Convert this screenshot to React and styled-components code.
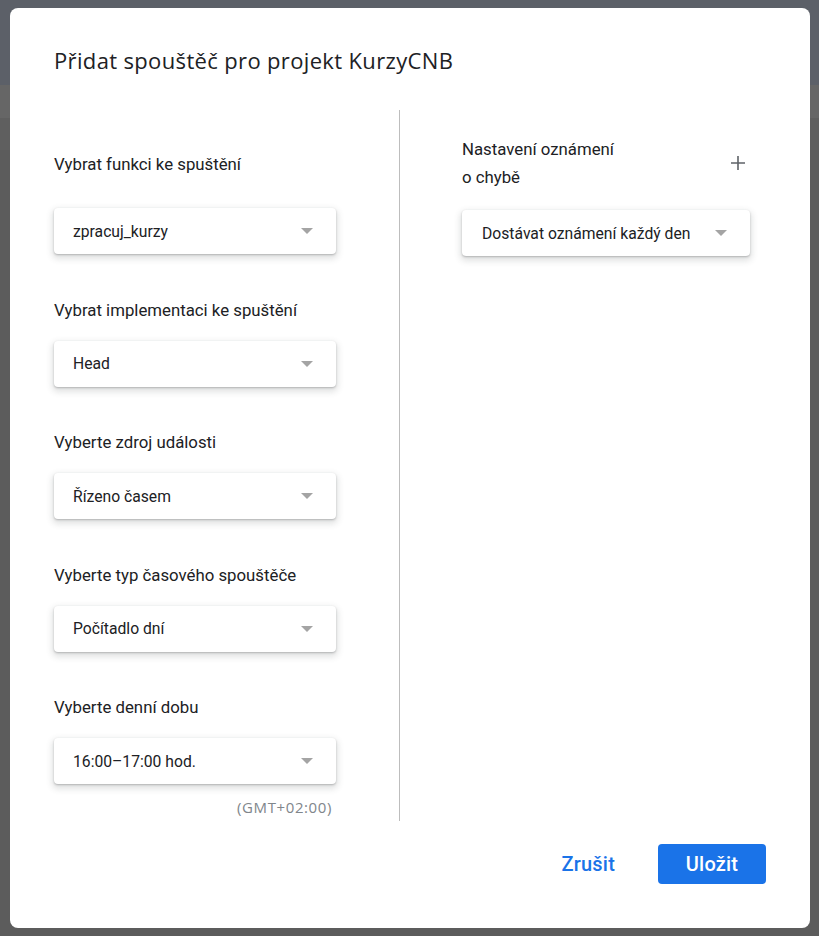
import React from 'react'
import styled, { createGlobalStyle } from 'styled-components'

const GlobalStyle = createGlobalStyle`
    html, body {
        margin: 0;
        padding: 0;
        background: #5c5c5c;
    }
    body {
        font-family: Roboto, 'Noto Sans', Arial, sans-serif;
        color: #202124;
    }
`

const MyBackdrop = styled.div`
    height: 936px;
    display: flex;
    flex-direction: column;
`
const MyBand = styled.div`
    height: ${props => props.h}px;
    flex: ${props => (props.h ? 'none' : 1)};
    background: ${props => props.bg};
`

const MyOverlay = styled.div`
    position: fixed;
    inset: 0;
    display: flex;
    align-items: flex-start;
    padding: 8px 0 0 10px;
`
const MyDialog = styled.div`
    box-sizing: border-box;
    width: 800px;
    height: 920px;
    background: #fff;
    border-radius: 8px;
    padding: 38px 44px 44px;
    display: flex;
    flex-direction: column;
`
const MyTitle = styled.h1`
    margin: 0;
    font-family: 'Open Sans', Roboto, Arial, sans-serif;
    font-size: 22px;
    line-height: 28px;
    letter-spacing: 0.35px;
    font-weight: 400;
    color: #202124;
`
const MyBody = styled.div`
    display: flex;
    margin-top: 36px;
`
const MyLeft = styled.div`
    width: 282px;
    padding: 44px 63px 4px 0;
    border-right: 1px solid #bdbdbd;
    display: flex;
    flex-direction: column;
`
const MyRight = styled.div`
    width: 288px;
    padding: 25px 0 0 62px;
`
const MyField = styled.div`
    display: flex;
    flex-direction: column;
    & + & {
        margin-top: 45.5px;
    }
`
const MyLabel = styled.div`
    font-size: 16.8px;
    line-height: 20px;
    color: #202124;
    margin-bottom: ${props => (props.first ? 34 : 21)}px;
`
const MySelect = styled.div`
    box-sizing: border-box;
    height: 46px;
    display: flex;
    align-items: center;
    justify-content: space-between;
    padding: 0 23px 0 ${props => props.pl || 19}px;
    background: #fff;
    border-radius: 4px;
    box-shadow: 0 1px 2px 0 rgba(60, 64, 67, 0.3), 0 3px 6px 2px rgba(60, 64, 67, 0.15);
    font-size: 15.7px;
    color: #202124;
    cursor: pointer;
`
const MyArrow = styled.span`
    width: 0;
    height: 0;
    border-left: 6.5px solid transparent;
    border-right: 6.5px solid transparent;
    border-top: 6.5px solid #a4a4a4;
`
const MyZone = styled.div`
    margin-top: 13px;
    padding-right: 4px;
    text-align: right;
    font-family: 'Open Sans', Roboto, Arial, sans-serif;
    font-size: 15px;
    letter-spacing: 0.6px;
    line-height: 20px;
    color: #80868b;
`
const MyNotifyHead = styled.div`
    display: flex;
    align-items: center;
    justify-content: space-between;
    margin-bottom: 19px;
`
const MyNotifyLabel = styled.div`
    font-size: 16.8px;
    line-height: 28px;
    color: #202124;
`
const MyIconButton = styled.button`
    width: 24px;
    height: 24px;
    padding: 0;
    border: 0;
    background: none;
    display: flex;
    align-items: center;
    justify-content: center;
    color: #5f6368;
    cursor: pointer;
`
const MyFooter = styled.div`
    margin-top: auto;
    display: flex;
    justify-content: flex-end;
    align-items: center;
    gap: 43px;
`
const MyButton = styled.button`
    height: 40px;
    padding: 0;
    width: ${props => (props.primary ? '108px' : 'auto')};
    border: 0;
    border-radius: 4px;
    font-family: Roboto, Arial, sans-serif;
    font-size: 20px;
    font-weight: 500;
    letter-spacing: 0.2px;
    color: ${props => (props.primary ? '#fff' : '#1a73e8')};
    background: ${props => (props.primary ? '#1a73e8' : 'transparent')};
    cursor: pointer;
`

const fields = [
    { label: 'Vybrat funkci ke spuštění', value: 'zpracuj_kurzy' },
    { label: 'Vybrat implementaci ke spuštění', value: 'Head' },
    { label: 'Vyberte zdroj události', value: 'Řízeno časem' },
    { label: 'Vyberte typ časového spouštěče', value: 'Počítadlo dní' },
    { label: 'Vyberte denní dobu', value: '16:00–17:00 hod.' },
]

function Select({ value, pl }) {
    return (
        <MySelect pl={pl}>
            <span>{value}</span>
            <MyArrow />
        </MySelect>
    )
}

function App() {
    return (
        <>
            <GlobalStyle />
            <MyBackdrop>
                <MyBand h={85} bg='#5c6068' />
                <MyBand h={33} bg='#666666' />
                <MyBand h={32} bg='#5f5f5f' />
                <MyBand bg='#5c5c5c' />
            </MyBackdrop>
            <MyOverlay>
                <MyDialog>
                    <MyTitle>Přidat spouštěč pro projekt KurzyCNB</MyTitle>
                    <MyBody>
                        <MyLeft>
                            {fields.map((f, i) => (
                                <MyField key={f.label}>
                                    <MyLabel first={i === 0}>{f.label}</MyLabel>
                                    <Select value={f.value} />
                                </MyField>
                            ))}
                            <MyZone>(GMT+02:00)</MyZone>
                        </MyLeft>
                        <MyRight>
                            <MyNotifyHead>
                                <MyNotifyLabel>
                                    Nastavení oznámení
                                    <br />o chybě
                                </MyNotifyLabel>
                                <MyIconButton title='Přidat'>
                                    <svg width='26' height='26' viewBox='0 0 24 24' fill='currentColor'>
                                        <path d='M19 12.8h-6.2V19h-1.6v-6.2H5v-1.6h6.2V5h1.6v6.2H19z' />
                                    </svg>
                                </MyIconButton>
                            </MyNotifyHead>
                            <Select value='Dostávat oznámení každý den' pl={20} />
                        </MyRight>
                    </MyBody>
                    <MyFooter>
                        <MyButton>Zrušit</MyButton>
                        <MyButton primary>Uložit</MyButton>
                    </MyFooter>
                </MyDialog>
            </MyOverlay>
        </>
    )
}

export default App
